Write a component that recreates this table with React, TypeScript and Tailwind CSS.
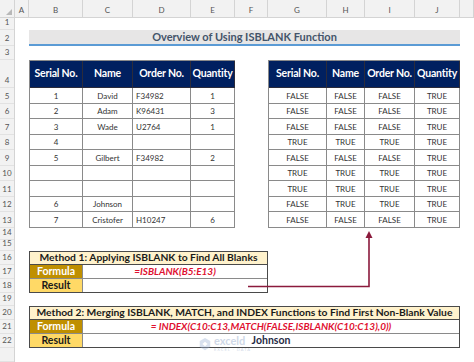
import React from "react";

const letters = ["A", "B", "C", "D", "E", "F", "G", "H", "I", "J", ""];
const rowNums = Array.from({ length: 23 }, (_, i) => (i < 22 ? String(i + 1) : ""));

const heads = ["Serial No.", "Name", "Order No.", "Quantity"];

const orders: string[][] = [
  ["1", "David", "F34982", "1"],
  ["2", "Adam", "K96431", "3"],
  ["3", "Wade", "U2764", "1"],
  ["4", "", "", ""],
  ["5", "Gilbert", "F34982", "2"],
  ["", "", "", ""],
  ["", "", "", ""],
  ["6", "Johnson", "", ""],
  ["7", "Cristofer", "H10247", "6"],
];

const T = "TRUE";
const F = "FALSE";
const blanks: string[][] = [
  [F, F, F, T],
  [F, F, F, T],
  [F, F, F, T],
  [T, T, T, T],
  [F, F, F, T],
  [T, T, T, T],
  [T, T, T, T],
  [F, T, T, T],
  [F, F, F, T],
];

const headCell =
  "flex items-center justify-center whitespace-nowrap bg-[#002060] text-white font-bold text-[10.5px] tracking-[-0.2px] border-r border-b border-[#2b2b3a]";
const bodyCell = "flex items-center border-r border-b border-[#8a8a8a] text-[8px] text-[#333333]";

function DataTable({ rows, place, leftOrder }: { rows: string[][]; place: string; leftOrder?: boolean }) {
  return (
    <div className={`${place} grid grid-cols-subgrid grid-rows-subgrid border-l border-t border-[#8a8a8a]`}>
      {heads.map((h) => (
        <div key={h} className={headCell}>
          {h}
        </div>
      ))}
      {rows.map((r, i) =>
        r.map((v, j) => (
          <div
            key={`${i}-${j}`}
            className={`${bodyCell} ${j === 2 && leftOrder ? "justify-start pl-[3px]" : "justify-center"}`}
          >
            {v}
          </div>
        ))
      )}
    </div>
  );
}

function MethodBox({
  title,
  formula,
  result,
  place,
  span,
  valueSpan,
}: {
  title: string;
  formula: string;
  result: string;
  place: string;
  span: string;
  valueSpan: string;
}) {
  return (
    <div className={`${place} grid grid-cols-subgrid grid-rows-subgrid border border-[#4a4a4a]`}>
      <div className={`${span} flex items-center justify-center bg-[#fff2cc] border-b border-[#4a4a4a] font-bold text-[10.3px] text-[#1a1a1a] whitespace-nowrap`}>
        {title}
      </div>
      <div className="flex items-center justify-center bg-[#bf8f00] border-r border-b border-[#8a8a8a] font-bold text-[10.5px] text-white">
        Formula
      </div>
      <div className={`${valueSpan} flex items-center justify-center border-b border-[#8a8a8a] font-bold italic text-[10px] text-[#e01030] whitespace-nowrap`}>
        {formula}
      </div>
      <div className="flex items-center justify-center bg-[#ffd966] border-r border-[#8a8a8a] font-bold text-[10.5px] text-[#1a1a1a]">
        Result
      </div>
      <div className={`${valueSpan} relative z-10 flex items-center justify-center font-bold text-[10.5px] text-[#1f2a44]`}>
        {result}
      </div>
    </div>
  );
}

export default function App() {
  return (
    <div className="relative grid h-[362px] w-[474px] overflow-hidden bg-white font-['Lato','Noto_Sans',sans-serif] grid-cols-[15px_14px_54px_50px_58px_44px_33px_59px_38px_50px_45px_1fr] grid-rows-[18px_12px_16px_14px_28px_16px_15px_16px_15px_16px_15px_16px_15px_16px_12px_11px_14px_14px_14px_13px_14px_14px_14px_1fr]">
      {/* column header bar */}
      <div className="col-start-1 col-span-12 row-start-1 grid grid-cols-subgrid bg-[#f2f2f2] border-b border-[#d4d4d4]">
        <div className="relative border-r border-[#d4d4d4]">
          <div className="absolute bottom-[2px] right-[2px] h-0 w-0 border-l-[6px] border-l-transparent [border-bottom:6px_solid_#b8b8b8]" />
        </div>
        {letters.map((l, i) => (
          <div
            key={i}
            className="flex items-center justify-center border-r border-[#d4d4d4] pt-[3px] text-[8px] text-[#555555]"
          >
            {l}
          </div>
        ))}
      </div>

      {/* row numbers */}
      <div className="col-start-1 row-start-2 row-span-23 grid grid-rows-subgrid bg-[#f2f2f2] border-r border-[#d4d4d4]">
        {rowNums.map((n, i) => (
          <div
            key={i}
            className="flex items-end justify-center border-b border-[#e2e2e2] pb-[1px] text-[8px] text-[#555555]"
          >
            {n}
          </div>
        ))}
      </div>

      {/* title band */}
      <div className="col-start-3 col-span-9 row-start-3 flex items-center justify-center bg-[#e7e6e6] border-b-2 border-[#5b9bd5] font-bold text-[11px] text-[#44546a]">
        Overview of Using ISBLANK Function
      </div>

      <DataTable rows={orders} leftOrder place="col-start-3 col-span-4 row-start-5 row-span-10" />
      <DataTable rows={blanks} place="col-start-8 col-span-4 row-start-5 row-span-10" />

      <MethodBox
        place="col-start-3 col-span-5 row-start-17 row-span-3"
        span="col-span-5"
        valueSpan="col-span-4"
        title="Method 1: Applying ISBLANK to Find All Blanks"
        formula="=ISBLANK(B5:E13)"
        result=""
      />
      <MethodBox
        place="col-start-3 col-span-9 row-start-21 row-span-3"
        span="col-span-9"
        valueSpan="col-span-8"
        title="Method 2: Merging ISBLANK, MATCH, and INDEX Functions to Find First Non-Blank Value"
        formula="= INDEX(C10:C13,MATCH(FALSE,ISBLANK(C10:C13),0))"
        result="Johnson"
      />

      {/* arrow from result to the output table */}
      <svg className="pointer-events-none absolute left-0 top-0" width="474" height="362" viewBox="0 0 474 362">
        <polyline points="248,286.5 369,286.5 369,237" fill="none" stroke="#8b1a3c" strokeWidth="1.6" />
        <polygon points="369,231 365.5,238 372.5,238" fill="#8b1a3c" />
      </svg>

      {/* watermark */}
      <div className="pointer-events-none absolute left-[198px] top-[335px] flex items-center gap-[2px] opacity-40">
        <svg width="14" height="14" viewBox="0 0 16 16">
          <path d="M8 1 L14 4.5 L14 11.5 L8 15 L2 11.5 L2 4.5 Z" fill="#9fb4d6" />
          <path d="M5 8 L8 5.5 L11 8 L8 10.5 Z" fill="#ffffff" />
        </svg>
        <div className="flex flex-col gap-[2px] leading-none">
          <span className="text-[11px] font-bold text-[#8aa0c4]">exceld</span>
          <span className="text-[4px] tracking-[1px] text-[#8aa0c4]">EXCEL · DATA</span>
        </div>
      </div>
    </div>
  );
}
